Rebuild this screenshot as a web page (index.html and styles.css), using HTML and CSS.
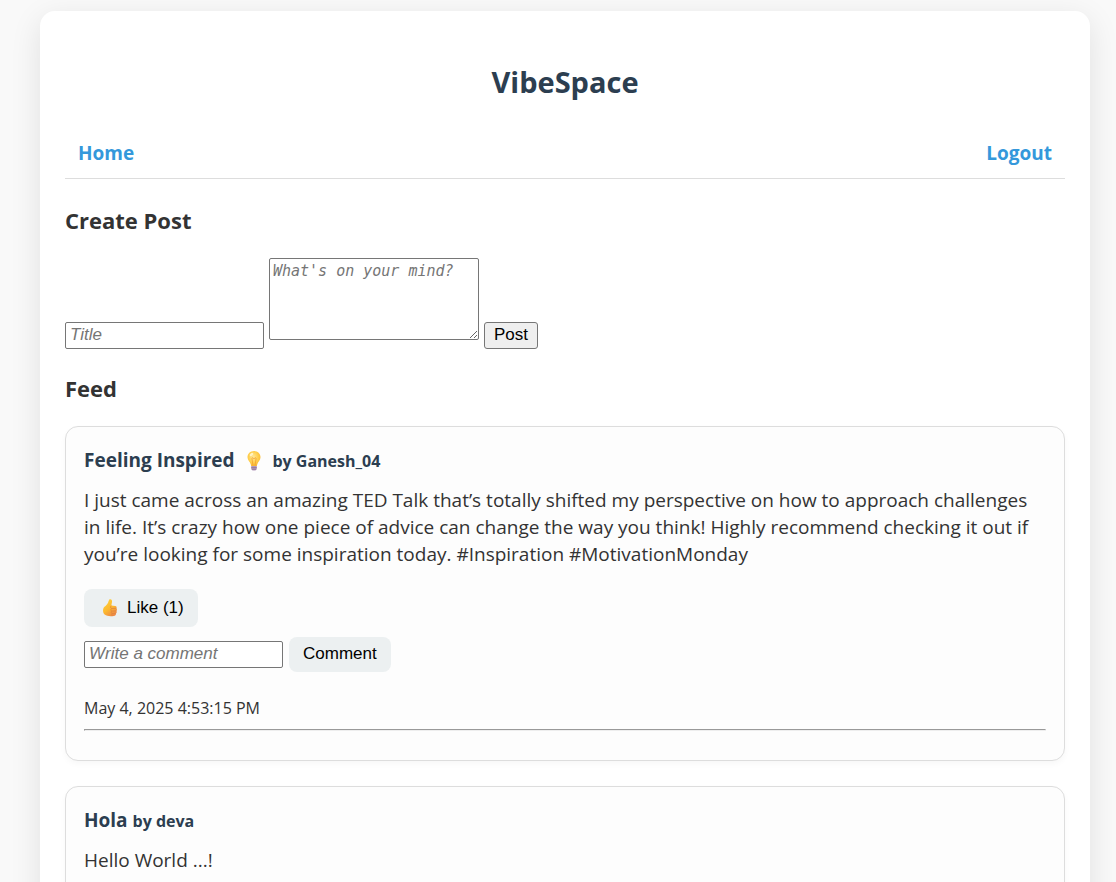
FILE: index.html
```html
<!DOCTYPE html>
<html lang="en">
<head>
<meta charset="utf-8">
<meta name="viewport" content="width=device-width, initial-scale=1">
<title>VibeSpace</title>
<link rel="stylesheet" href="styles.css">
</head>
<body>
<main class="container">
  <h1 class="brand">VibeSpace</h1>
  <nav class="nav">
    <a class="nav-link" href="#home">Home</a>
    <a class="nav-link" href="#logout">Logout</a>
  </nav>

  <h2 class="section-title">Create Post</h2>
  <form class="create-form">
    <input class="field" type="text" placeholder="Title" aria-label="Title">
    <textarea class="field-area" placeholder="What's on your mind?" aria-label="What's on your mind?"></textarea>
    <button class="post-button" type="button">Post</button>
  </form>

  <h2 class="section-title">Feed</h2>

  <article class="post">
    <h3 class="post-title">Feeling Inspired
      <svg class="bulb" viewBox="0 0 20 22" aria-hidden="true">
        <defs>
          <radialGradient id="glass" cx="45%" cy="40%" r="65%">
            <stop offset="0" stop-color="#ffe79a"/>
            <stop offset="0.55" stop-color="#ffd04f"/>
            <stop offset="1" stop-color="#f9b52e"/>
          </radialGradient>
        </defs>
        <path d="M10 1C6.300 1 3.500 3.800 3.500 7.300C3.500 10.300 6 11.600 6.800 14.400L7.200 16H12.800L13.200 14.400C14 11.600 16.500 10.300 16.500 7.300C16.500 3.800 13.700 1 10 1Z" fill="url(#glass)"/>
        <path d="M9 15.500L8 9C7.500 7.500 9.300 7.300 9.500 8.500H10.500C10.700 7.300 12.500 7.500 12 9L11 15.500" fill="none" stroke="#f09a2c" stroke-width="0.700"/>
        <ellipse cx="7.500" cy="4.500" rx="2" ry="1.300" fill="#fff3c4" transform="rotate(-35 7.500 4.500)"/>
        <path d="M7.200 16H12.800V18.800L11.500 20.500H8.500L7.200 18.800Z" fill="#b59bbd"/>
        <path d="M7.200 17.600H12.800M7.600 19.300H12.400" stroke="#86708f" stroke-width="0.700"/>
      </svg>
      <small class="author">by Ganesh_04</small>
    </h3>
    <p class="post-body">I just came across an amazing TED Talk that’s totally shifted my perspective on how to approach challenges in life. It’s crazy how one piece of advice can change the way you think! Highly recommend checking it out if you’re looking for some inspiration today. #Inspiration #MotivationMonday</p>
    <button class="action like" type="button">
      <svg class="thumb" viewBox="0 0 20 20" aria-hidden="true">
        <defs>
          <linearGradient id="skin" x1="0" y1="0" x2="0.600" y2="1">
            <stop offset="0" stop-color="#ffd33c"/>
            <stop offset="0.600" stop-color="#fcb92f"/>
            <stop offset="1" stop-color="#ee8b45"/>
          </linearGradient>
        </defs>
        <path d="M9.500 1.300C11.200 0.700 12.300 1.900 12 4L11.300 7.600L15.300 7.900C16.600 8 17 9.500 16.300 10.300C17.200 11 17.200 12.200 16.400 12.900C17 13.800 16.800 14.900 15.900 15.400C16.200 16.800 15.200 17.800 13.800 17.900C10 18.500 6.800 18 4.600 16.600C2.800 15.200 2.500 10.800 4.200 9.100C6.500 7.200 8.200 5.500 8.600 3Z" fill="url(#skin)"/>
        <path d="M11.300 7.700C10.300 8.700 10.500 10 11.600 10.500L16.300 10.300M11.600 10.500C10.400 11.300 10.600 12.700 11.700 13.100L16.400 12.900M11.700 13.100C10.900 13.800 11 15.100 12 15.500L15.900 15.400M12 15.500C11.500 16.300 11.800 17.400 12.500 17.900" fill="none" stroke="#df8340" stroke-width="0.800"/>
      </svg>
      Like (1)
    </button>
    <form class="comment-form">
      <input class="field" type="text" placeholder="Write a comment" aria-label="Write a comment">
      <button class="action" type="button">Comment</button>
    </form>
    <p class="post-date">May 4, 2025 4:53:15 PM</p>
    <hr class="divider">
  </article>

  <article class="post">
    <h3 class="post-title">Hola <small class="author">by deva</small></h3>
    <p class="post-body">Hello World ...!</p>
  </article>
</main>
</body>
</html>
```
FILE: styles.css
```css
* {
  box-sizing: border-box;
}

html {
  overflow: hidden;
}

body {
  margin: 0;
  padding: 11px 26px 0 40px;
  background: #f9f9f9;
  color: #333;
  font-family: "Open Sans", "Noto Sans", sans-serif;
  font-size: 19px;
  line-height: 27px;
}

.container {
  padding: 25px;
  background: #fff;
  border-radius: 15px;
  box-shadow: 0 8px 31px rgba(0, 0, 0, 0.1);
}

.brand {
  margin: 26px 0 38px;
  color: #2c3e50;
  font-size: 29px;
  line-height: 40px;
  text-align: center;
}

.nav {
  display: flex;
  justify-content: space-between;
  margin-bottom: 26px;
  padding: 0 13px 11px;
  border-bottom: 1px solid #ddd;
}

.nav-link {
  color: #3498db;
  font-weight: 700;
  text-decoration: none;
}

.section-title {
  margin: 24px 0 23px;
  font-size: 22px;
  line-height: 30px;
}

.field {
  width: 199px;
  height: 27px;
  padding: 1px 4px;
  border: 1px solid #767676;
  border-radius: 2px;
  background: #fff;
  font: 17px "Liberation Sans", Arial, sans-serif;
}

.field::placeholder,
.field-area::placeholder {
  color: #757575;
  font-style: italic;
}

.field-area {
  width: 210px;
  height: 82px;
  padding: 3px;
  border: 1px solid #767676;
  border-radius: 2px;
  font: 15px "DejaVu Sans Mono", monospace;
}

.post-button {
  height: 27px;
  padding: 0 9px;
  border: 1px solid #767676;
  border-radius: 3px;
  background: #efefef;
  color: #000;
  font: 17px "Liberation Sans", Arial, sans-serif;
}

.post {
  min-height: 160px;
  margin-bottom: 25px;
  padding: 18px;
  border: 1px solid #ddd;
  border-radius: 13px;
  background: #fdfdfd;
  box-shadow: 0 3px 6px rgba(0, 0, 0, 0.03);
}

.post-title {
  margin: 0 0 11px;
  color: #2c3e50;
  font-size: 19px;
  line-height: 30px;
}

.author {
  font-size: 16px;
}

.bulb {
  width: 20px;
  height: 22px;
  margin: 0 4px;
  vertical-align: -5px;
}

.post-body {
  margin: 0 0 21px;
}

.action {
  height: 35px;
  padding: 0 14px;
  border: 0;
  border-radius: 8px;
  background: #ecf0f1;
  color: #000;
  font: 17px "Liberation Sans", Arial, sans-serif;
}

.like {
  display: flex;
  align-items: center;
  gap: 7px;
  height: 38px;
  margin-bottom: 10px;
  padding-left: 16px;
}

.thumb {
  width: 20px;
  height: 20px;
}

.comment-form {
  display: flex;
  align-items: center;
  gap: 6px;
}

.post-date {
  margin: 24px 0 9px;
  font-size: 16px;
  line-height: 24px;
}

.divider {
  margin: 0 0 11px;
  border: 1px solid;
  border-color: #999 #eee #eee #999;
}
```
